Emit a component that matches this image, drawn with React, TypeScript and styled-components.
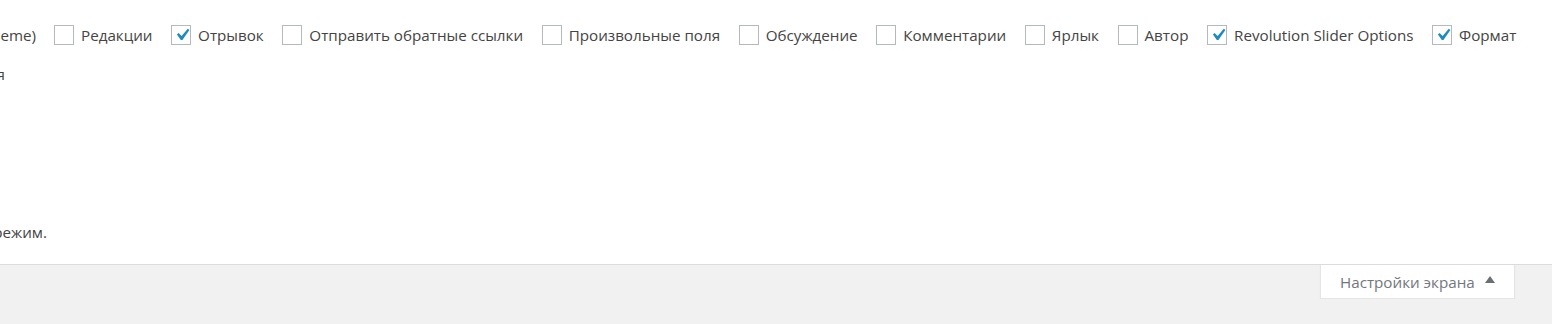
import React from "react";
import styled, { createGlobalStyle } from "styled-components";

const GlobalStyle = createGlobalStyle`
  html, body { margin: 0; padding: 0; }
  body {
    background: #f1f1f1;
    font-family: "Open Sans", "Noto Sans", sans-serif;
    font-size: 15.2px;
    color: #444;
  }
`;

const Panel = styled.div`
  background: #fff;
  border-bottom: 1px solid #dcdcdc;
  height: 265px;
  box-sizing: border-box;
  padding-top: 25px;
  overflow: hidden;
`;

const PrefsRow = styled.div`
  display: flex;
  align-items: center;
  height: 20px;
  white-space: nowrap;
`;

const Clip = styled.div<{ $w: number }>`
  width: ${(p) => p.$w}px;
  flex: none;
  display: flex;
  justify-content: flex-end;
  white-space: nowrap;
`;

const Pref = styled.label<{ $first?: boolean }>`
  display: flex;
  align-items: center;
  margin-left: ${(p) => (p.$first ? 18 : 18.6)}px;
  cursor: pointer;
`;

const Box = styled.span`
  width: 20px;
  height: 20px;
  box-sizing: border-box;
  border: 1px solid #b4b9be;
  background: #fff;
  margin-right: 7px;
  display: flex;
  align-items: center;
  justify-content: center;
  flex: none;
  overflow: visible;
`;

const TextLine = styled.div<{ $top: number }>`
  display: flex;
  margin-top: ${(p) => p.$top}px;
  line-height: 20px;
`;

const Links = styled.div`
  display: flex;
  justify-content: flex-end;
  padding-right: 37px;
`;

const ShowSettings = styled.button`
  display: flex;
  align-items: center;
  height: 34px;
  width: 195px;
  box-sizing: border-box;
  padding: 0 0 0 19px;
  background: #fff;
  border: 1px solid #e5e5e5;
  border-top: none;
  box-shadow: 0 1px 1px rgba(0, 0, 0, 0.06);
  font-family: inherit;
  font-size: 15.2px;
  color: #72777c;
  cursor: pointer;
`;

const Arrow = styled.span`
  width: 0;
  height: 0;
  border-left: 5px solid transparent;
  border-right: 5px solid transparent;
  border-bottom: 7px solid #6b6f73;
  margin-left: 10px;
  margin-top: -5px;
`;

const CheckIcon = styled.svg`
  flex: none;
  margin: -3px -3px -3px -2px;
`;

const Check = () => (
  <CheckIcon width="24" height="24" viewBox="0 0 20 20">
    <path d="M14.83 4.89l1.34.94-5.81 8.38H9.02L5.78 9.67l1.34-1.25 2.57 2.4z" fill="#1e8cbe" />
  </CheckIcon>
);

const prefs: [string, boolean][] = [
  ["Редакции", false],
  ["Отрывок", true],
  ["Отправить обратные ссылки", false],
  ["Произвольные поля", false],
  ["Обсуждение", false],
  ["Комментарии", false],
  ["Ярлык", false],
  ["Автор", false],
  ["Revolution Slider Options", true],
  ["Формат", true],
];

export default function App() {
  return (
    <>
      <GlobalStyle />
      <Panel>
        <PrefsRow>
          <Clip $w={36}>Блоки (theme)</Clip>
          {prefs.map(([t, c], i) => (
            <Pref key={t} $first={i === 0}>
              <Box>{c && <Check />}</Box>
              {t}
            </Pref>
          ))}
        </PrefsRow>
        <TextLine $top={19}>
          <Clip $w={5}>Настройки отображения</Clip>
        </TextLine>
        <TextLine $top={138}>
          <Clip $w={47}>Включить полноэкранный режим.</Clip>
        </TextLine>
      </Panel>
      <Links>
        <ShowSettings type="button">
          Настройки экрана
          <Arrow />
        </ShowSettings>
      </Links>
    </>
  );
}
